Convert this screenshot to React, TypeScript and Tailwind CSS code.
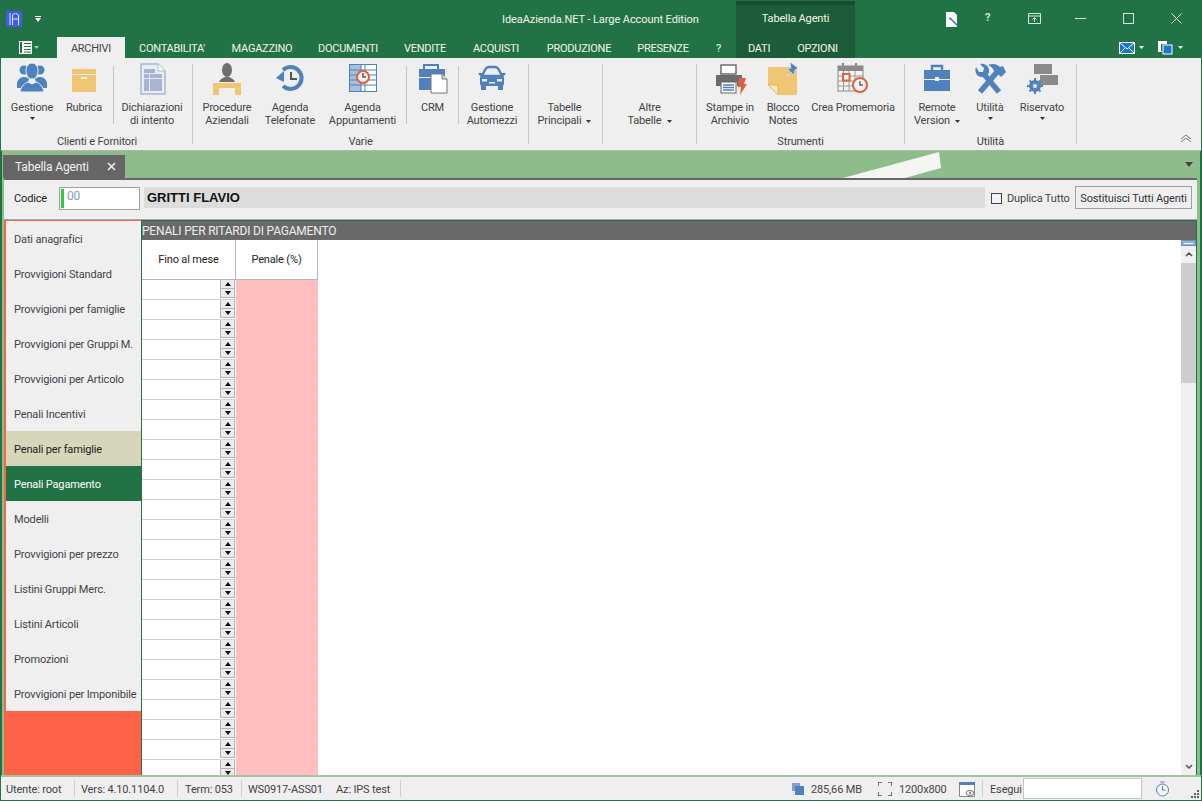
import React from "react";

const B = "#4f81bd";
const G = "#f0c674";
const R = "#e0603f";

const I = ({ children, w = 36 }: { children: React.ReactNode; w?: number }) => (
  <svg width={w} height={34} viewBox={`0 0 ${w} 34`} className="block">{children}</svg>
);

const People = () => (
  <I>
    <circle cx="10" cy="8" r="4.500" fill={B} /><circle cx="26" cy="8" r="4.500" fill={B} />
    <path d="M3 21c1-4 4-6 7-6s4 1 5 2l-3 9H3z" fill={B} /><path d="M33 21c-1-4-4-6-7-6s-4 1-5 2l3 9h9z" fill={B} />
    <path d="M12 8a6 7 0 0 1 12 0c0 5-2 9-6 9s-6-4-6-9z" fill={B} stroke="#efefef" strokeWidth="1" />
    <path d="M6 30c1-6 5-9 8-10l4 2 4-2c3 1 7 4 8 10z" fill={B} stroke="#efefef" strokeWidth="1" />
  </I>
);
const Box = () => (
  <I>
    <rect x="6" y="7" width="24" height="5" fill={G} /><rect x="6" y="13" width="24" height="17" fill={G} />
    <rect x="15" y="15" width="6" height="2" fill="#fff6dd" />
  </I>
);
const Doc = () => (
  <I>
    <path d="M7 2h17l7 7v23H7z" fill="#e9edf5" stroke="#aab6d2" strokeWidth="1.5" />
    <path d="M24 2v7h7" fill="#fff" stroke="#aab6d2" />
    <rect x="10" y="7" width="11" height="4" fill="#a8b4d0" /><rect x="10" y="12" width="5" height="4" fill="#a8b4d0" /><rect x="16" y="12" width="12" height="4" fill="#a8b4d0" />
    <rect x="10" y="17" width="5" height="12" fill="#a8b4d0" /><rect x="16" y="17" width="12" height="12" fill="#a8b4d0" />
  </I>
);
const Desk = () => (
  <I w={32}>
    <ellipse cx="16" cy="8" rx="5" ry="7" fill="#6e6e6e" /><path d="M8 20c1-3 4-4 6-5h4c2 1 5 2 6 5z" fill="#6e6e6e" />
    <path d="M2 21h28v12h-6v-7H8v7H2z" fill={G} />
  </I>
);
const History = () => (
  <I>
    <path d="M11 8A11 11 0 1 1 11 24" fill="none" stroke={B} strokeWidth="4" />
    <path d="M4 16l8-7v11z" fill={B} />
    <path d="M19 10v7h6" fill="none" stroke="#555" strokeWidth="2" />
  </I>
);
const Sched = () => (
  <I w={30}>
    <rect x="1.5" y="2.5" width="27" height="27" fill="#fff" stroke={B} />
    <rect x="2" y="3" width="11" height="26" fill="#a8c0dc" />
    <path d="M2 8h26M2 13h26M2 18h26M2 23h26M13 3v26M17 3v26" stroke={B} strokeWidth="1" />
    <circle cx="15" cy="15" r="6" fill="#f6f0e8" stroke={R} strokeWidth="2" />
    <path d="M15 11v4h3" stroke="#555" strokeWidth="1.5" fill="none" />
  </I>
);
const Crm = () => (
  <I w={32}>
    <path d="M7 7V3h14v4" fill="none" stroke={B} strokeWidth="2" />
    <rect x="2" y="7" width="26" height="8" fill={B} /><rect x="2" y="16" width="26" height="12" fill={B} />
    <path d="M14 12h11l5 5v14H14z" fill="#fff" stroke="#777" strokeWidth="1" /><path d="M25 12v5h5" fill="#ddd" stroke="#777" />
  </I>
);
const Car = () => (
  <I w={30}>
    <path d="M8 8c1-2 2-3 4-3h6c2 0 3 1 4 3l3 6H5z" fill="none" stroke={B} strokeWidth="2.4" />
    <path d="M1 11h4l1 3H3zM29 11h-4l-1 3h3z" fill={B} />
    <rect x="3" y="14" width="24" height="10" rx="2" fill={B} /><rect x="4" y="24" width="5" height="4" fill={B} /><rect x="21" y="24" width="5" height="4" fill={B} />
    <rect x="5" y="17" width="5" height="2.5" fill="#efefef" /><rect x="20" y="17" width="5" height="2.5" fill="#efefef" /><rect x="12" y="20" width="6" height="1.5" fill="#efefef" />
  </I>
);
const Printer = () => (
  <I>
    <rect x="9" y="3" width="15" height="9" fill="#fff" stroke="#666" strokeWidth="1.4" />
    <path d="M4 13h26v11h-5v-4H9v4H4z" fill="#6c6c6c" />
    <rect x="9" y="20" width="15" height="11" fill="#fff" stroke="#666" />
    <path d="M11 23h11M11 25.5h11M11 28h11" stroke={B} strokeWidth="1.4" />
    <path d="M27 16h7l-2 6h3l-7 11 1-8h-3z" fill={R} />
  </I>
);
const Note = () => (
  <I w={32}>
    <path d="M1 5h29v28H11L1 23z" fill={G} /><path d="M1 23h10v10z" fill="#f8e5b8" stroke="#d4ab55" strokeWidth=".7" />
    <path d="M23 0l8 6-3 2-1 5-3-3-4 4 3-5-3-2 4-1z" fill={B} stroke="#efefef" strokeWidth=".6" />
  </I>
);
const Cal = () => (
  <I>
    <rect x="3" y="4" width="25" height="25" fill="#f4f4f4" stroke="#8a8a8a" />
    <rect x="3" y="4" width="25" height="5" fill="#8a8a8a" />
    <path d="M8 1v6M21 1v6" stroke="#8a8a8a" strokeWidth="2" />
    <path d="M3 14h25M3 19h25M3 24h25M8.500 9v20M14 9v20M20 9v20" stroke="#999" strokeWidth="1" />
    <rect x="8" y="12" width="6.500" height="6.500" fill="#fff" stroke={R} strokeWidth="2" />
    <circle cx="25" cy="23" r="7" fill="#f4f4f4" stroke={R} strokeWidth="2" /><path d="M25 19v4h3" stroke="#666" strokeWidth="1.500" fill="none" />
  </I>
);
const Brief = () => (
  <I w={30}>
    <path d="M10 8V4h10v4" fill="none" stroke={B} strokeWidth="2.400" />
    <rect x="2" y="8" width="26" height="9" fill={B} /><rect x="2" y="18" width="26" height="11" fill={B} /><rect x="13" y="15" width="4" height="4" fill="#efefef" />
  </I>
);
const Tools = () => (
  <I w={32}>
    <path d="M9 11L25 30" stroke={B} strokeWidth="5.500" />
    <path d="M2 5c-2 5 1 11 8 10l5-4c1-6-3-10-9-9l4 4-1 4-4 0z" fill={B} />
    <path d="M23 10L6 30" stroke={B} strokeWidth="5.500" />
    <path d="M14 3c5-2 9-1 12 2l3-1 3 6-5 5-3-3-3-1-2-4c-1-2-3-3-5-4z" fill={B} />
  </I>
);
const Chat = () => (
  <I>
    <rect x="10" y="2" width="18" height="10" fill="#8a8a8a" /><rect x="16" y="13" width="18" height="10" fill="#8a8a8a" />
    <circle cx="11" cy="24" r="4.500" fill="none" stroke={B} strokeWidth="3" />
    <path d="M11 16v16M3 24h16M5.500 18.500l11 11M5.500 29.500l11-11" stroke={B} strokeWidth="2" />
    <circle cx="11" cy="24" r="2" fill="#efefef" />
  </I>
);

const Caret = ({ c = "#333", cls = "" }: { c?: string; cls?: string }) => (
  <svg width="5" height="3" viewBox="0 0 5 3" className={`inline-block ${cls}`}><path d="M0 0h5L2.500 3z" fill={c} /></svg>
);

const Item = ({ w, icon, l1, l2, caret, caret2 }: { w: string; icon?: React.ReactNode; l1: string; l2?: string; caret?: boolean; caret2?: boolean }) => (
  <div className={`${w} flex flex-col items-center`}>
    <div className="h-[43px] pt-[4px] flex justify-center">{icon}</div>
    <div className="leading-[13px] whitespace-nowrap">{l1}</div>
    {l2 && <div className="leading-[13px] whitespace-nowrap">{l2}{caret2 && <Caret cls="ml-[5px] align-middle" />}</div>}
    {caret && <div className="leading-[13px] flex justify-center pt-[3px]"><Caret /></div>}
  </div>
);
const Sep = () => <div className="w-px h-[80px] mt-[6px] bg-[#c6c6c6] shrink-0" />;
const Short = () => <div className="w-px h-[58px] mt-[8px] bg-[#c6c6c6] shrink-0" />;
const Group = ({ w, label, children }: { w: string; label?: string; children: React.ReactNode }) => (
  <div className={`${w} h-[92px] shrink-0 flex flex-col`}>
    <div className="h-[77px] flex">{children}</div>
    <div className="leading-[13px] text-center">{label}</div>
  </div>
);

const tabs = [
  { t: "CONTABILITA'", w: "w-[94px]" },
  { t: "MAGAZZINO", w: "w-[86px]" },
  { t: "DOCUMENTI", w: "w-[86px]" },
  { t: "VENDITE", w: "w-[68px]" },
  { t: "ACQUISTI", w: "w-[74px]" },
  { t: "PRODUZIONE", w: "w-[92px]" },
  { t: "PRESENZE", w: "w-[76px]" },
  { t: "?", w: "w-[35px]" },
];
const menu = ["Dati anagrafici", "Provvigioni Standard", "Provvigioni per famiglie", "Provvigioni per Gruppi M.", "Provvigioni per Articolo", "Penali Incentivi", "Penali per famiglie", "Penali Pagamento", "Modelli", "Provvigioni per prezzo", "Listini Gruppi Merc.", "Listini Articoli", "Promozioni", "Provvigioni per Imponibile"];
const rows = Array.from({ length: 25 }, (_, i) => i);

const Spin = ({ up }: { up?: boolean }) => (
  <div className="w-[15px] h-[9px] bg-[#ececec] border border-t-0 border-[#b4b4b4] flex items-center justify-center">
    <svg width="6" height="4" viewBox="0 0 6 4"><path d={up ? "M0 4h6L3 0z" : "M0 0h6L3 4z"} fill="#111" /></svg>
  </div>
);

export default function App() {
  return (
    <div className="w-[1202px] h-[801px] overflow-hidden flex flex-col bg-[#217346] font-['Roboto',sans-serif] text-[11px] text-[#444] tracking-[-0.15px]">
      {/* header */}
      <div className="h-[58px] flex shrink-0">
        <div className="w-[736px] shrink-0 flex flex-col">
          <div className="h-[37px] flex items-center">
            <div className="ml-[6px] w-[16px] h-[16px] bg-[#3f5fe0] flex items-center justify-center">
              <svg width="10" height="12" viewBox="0 0 10 12"><path d="M1 0v12M3.500 12V2l3-2 3 2v10M3.500 6h6" stroke="#dfe6ff" fill="none" /></svg>
            </div>
            <svg width="6" height="6" viewBox="0 0 6 6" className="ml-[13px]"><path d="M0 0h6v1H0zM0 2h6L3 6z" fill="#fff" /></svg>
            <div className="ml-[461px] pt-[3px] text-[#f4f4ea] whitespace-nowrap tracking-[-0.08px]">IdeaAzienda.NET - Large Account Edition</div>
          </div>
          <div className="h-[21px] flex items-stretch text-[#f5f5e6] tracking-[-0.25px]">
            <div className="w-[57px] shrink-0 pl-[19px] flex items-center gap-[2px]">
              <svg width="13" height="13" viewBox="0 0 13 13"><path d="M0 0h13v13H0z" fill="#fff" /><path d="M1 1h2v11H1zM5 2h7v1H5zM5 5h7v1H5zM5 8h7v1H5zM5 10.500h7v1H5z" fill="#217346" /></svg>
              <Caret c="#9cc" />
            </div>
            <div className="w-[68px] shrink-0 pt-[3px] bg-[#efefef] text-[#444] flex items-center justify-center">ARCHIVI</div>
            {tabs.map((t) => <div key={t.t} className={`${t.w} shrink-0 pt-[3px] flex items-center justify-center whitespace-nowrap`}>{t.t}</div>)}
          </div>
        </div>
        <div className="w-[119px] shrink-0 flex flex-col bg-[#1d5c3a] text-[#f5f5e6] border-t-[4px] border-[#184d31] mt-px">
          <div className="h-[32px] pb-[4px] flex items-center justify-center">Tabella Agenti</div>
          <div className="h-[21px] pt-[3px] flex items-center tracking-[-0.25px]">
            <span className="pl-[12px] pr-[27px]">DATI</span><span>OPZIONI</span>
          </div>
        </div>
        <div className="flex-1 flex flex-col">
          <div className="h-[37px] flex items-center text-[#d9e6dd]">
            <svg width="14" height="16" viewBox="0 0 14 16" className="ml-[90px]"><path d="M1 1h8l3 3v12H1z" fill="#fff" /><path d="M6 7l6 6 1 1-1 1-6-6-2-1 1-2z" fill="#2a6fc0" /></svg>
            <span className="ml-[26px] w-[6px] font-bold">?</span>
            <svg width="14" height="12" viewBox="0 0 14 12" className="ml-[37px]"><path d="M.5.500h12v10H.5zM.5 3h12M6.500 9V5M4.500 6.500l2-2 2 2" fill="none" stroke="#d9e6dd" /></svg>
            <div className="ml-[33px] w-[11px] h-px bg-[#d9e6dd]" />
            <div className="ml-[37px] w-[11px] h-[11px] border border-[#d9e6dd]" />
            <svg width="11" height="11" viewBox="0 0 11 11" className="ml-[37px]"><path d="M.5.500l10 10M10.500.500l-10 10" stroke="#d9e6dd" /></svg>
          </div>
          <div className="h-[21px] flex items-center">
            <svg width="16" height="12" viewBox="0 0 16 12" className="ml-[264px]"><rect width="16" height="12" fill="#fff" /><rect x="1" y="1" width="14" height="10" fill="#1976d2" /><path d="M1 1l7 6 7-6M1 11l5-5M15 11l-5-5" stroke="#fff" fill="none" /></svg>
            <Caret c="#fff" cls="ml-[4px]" />
            <svg width="15" height="14" viewBox="0 0 15 14" className="ml-[14px]"><path d="M0 0h9v3H3v7h1v1H0z" fill="#fff" /><rect x="5" y="4" width="9" height="9" fill="#1976d2" stroke="#fff" /></svg>
            <Caret c="#fff" cls="ml-[5px]" />
          </div>
        </div>
      </div>

      {/* ribbon */}
      <div className="h-[93px] mx-[1px] bg-[#efefef] border-b border-[#b4b4b4] shrink-0 flex pl-[1px] relative">
        <Group w="w-[190px]" label="Clienti e Fornitori">
          <Item w="w-[60px]" icon={<People />} l1="Gestione" caret />
          <Item w="w-[44px]" icon={<Box />} l1="Rubrica" />
          <div className="w-[7px]" /><Short />
          <Item w="w-[76px]" icon={<Doc />} l1="Dichiarazioni" l2="di intento" />
        </Group>
        <Sep />
        <Group w="w-[335px]" label="Varie">
          <Item w="w-[68px]" icon={<Desk />} l1="Procedure" l2="Aziendali" />
          <Item w="w-[58px]" icon={<History />} l1="Agenda" l2="Telefonate" />
          <Item w="w-[87px]" icon={<Sched />} l1="Agenda" l2="Appuntamenti" />
          <Short />
          <Item w="w-[51px]" icon={<Crm />} l1="CRM" />
          <Short />
          <Item w="w-[66px]" icon={<Car />} l1="Gestione" l2="Automezzi" />
        </Group>
        <Sep />
        <Group w="w-[73px]">
          <Item w="w-[71px]" l1="Tabelle" l2="Principali" caret2 />
        </Group>
        <Sep />
        <Group w="w-[93px]">
          <Item w="w-[93px]" l1="Altre" l2="Tabelle" caret2 />
        </Group>
        <Sep />
        <Group w="w-[207px]" label="Strumenti">
          <Item w="w-[66px]" icon={<Printer />} l1="Stampe in" l2="Archivio" />
          <Item w="w-[40px]" icon={<Note />} l1="Blocco" l2="Notes" />
          <Item w="w-[100px]" icon={<Cal />} l1="Crea Promemoria" />
        </Group>
        <Sep />
        <Group w="w-[171px]" label="Utilità">
          <Item w="w-[64px]" icon={<Brief />} l1="Remote" l2="Version" caret2 />
          <Item w="w-[42px]" icon={<Tools />} l1="Utilità" caret />
          <Item w="w-[62px]" icon={<Chat />} l1="Riservato" caret />
        </Group>
        <Sep />
        <svg width="12" height="9" viewBox="0 0 12 9" className="absolute left-[1179px] top-[76px]"><path d="M1 5l5-4 5 4M1 8l5-4 5 4" fill="none" stroke="#777" /></svg>
      </div>

      {/* body */}
      <div className="flex-1 min-h-0 mx-[2px] bg-[#8fbc8b] flex flex-col relative">
        <div className="h-[27px] shrink-0 flex items-end pl-px relative">
          <div className="w-[122px] h-[23px] bg-[#666] text-[#f2f2f2] flex items-center pl-[12px] justify-between pr-[9px] text-[12px]">
            <span>Tabella Agenti</span>
            <svg width="9" height="9" viewBox="0 0 9 9"><path d="M1 1l7 7M8 1l-7 7" stroke="#eee" strokeWidth="1.600" /></svg>
          </div>
          <svg width="100" height="27" viewBox="0 0 100 27" className="absolute left-[840px] top-0"><path d="M1 27L97 1l2 16-36 10z" fill="#f4f6f2" /></svg>
          <svg width="8" height="5" viewBox="0 0 8 5" className="absolute left-[1183px] top-[11px]"><path d="M0 0h8L4 5z" fill="#444" /></svg>
        </div>
        <div className="flex-1 min-h-0 ml-[2px] mr-[3px] border-t-2 border-[#666] flex flex-col">
          {/* code row */}
          <div className="h-[40px] shrink-0 bg-[#efefef] border-b border-[#a8a8a8] flex items-center pl-[10px] pr-[5px] pb-[2px]">
            <span className="w-[45px] pt-[2px] text-[#222]">Codice</span>
            <div className="w-[81px] h-[23px] bg-white border border-[#a0a0a0] flex items-start pl-[1px] pt-[1px] gap-[3px]">
              <div className="w-[3px] h-[19px] bg-[#2ecc40]" />
              <span className="text-[#7f9cc0] text-[12px] leading-[14px]">00</span>
            </div>
            <div className="ml-[4px] mb-[2px] pt-[1px] w-[841px] h-[21px] bg-[#dcdcdc] pl-[3px] font-['Liberation_Sans',sans-serif] font-bold text-[13px] text-[#111] tracking-normal flex items-center">GRITTI FLAVIO</div>
            <div className="ml-[6px] w-[11px] h-[11px] border border-[#444] bg-[#f4f4f4]" />
            <span className="ml-[5px] w-[68px] pt-[2px] whitespace-nowrap">Duplica Tutto</span>
            <div className="w-[117px] h-[23px] mb-[2px] pt-[3px] border border-[#a0a0a0] flex items-center justify-center whitespace-nowrap text-[#333]">Sostituisci Tutti Agenti</div>
          </div>
          {/* main */}
          <div className="flex-1 min-h-0 flex border-r border-[#217346] bg-white">
            <div className="w-[138px] shrink-0 bg-[#ff6347] pl-[2px] pt-[1px] border-r border-[#217346] flex flex-col">
              {menu.map((m, i) => (
                <div key={m} className={`h-[35px] shrink-0 flex items-center pl-[8px] pt-[4px] whitespace-nowrap ${i === 6 ? "bg-[#d6d6ba] text-[#222]" : i === 7 ? "bg-[#217346] text-white" : "bg-[#efefef]"}`}>{m}</div>
              ))}
            </div>
            <div className="flex-1 min-w-0 flex flex-col border-t border-[#217346]">
              <div className="h-[19px] shrink-0 bg-[#696969] text-[#eee] text-[12px] leading-[21px] whitespace-nowrap tracking-[-0.2px]">PENALI PER RITARDI DI PAGAMENTO</div>
              <div className="flex-1 min-h-0 flex overflow-hidden">
                <div className="w-[176px] shrink-0 flex flex-col overflow-hidden">
                  <div className="h-[40px] shrink-0 flex border-b border-[#a9b9cb] text-[#222]">
                    <div className="w-[94px] pt-[2px] border-r border-[#a9b9cb] flex items-center justify-center">Fino al mese</div>
                    <div className="flex-1 pt-[2px] border-r border-[#a9b9cb] flex items-center justify-center">Penale (%)</div>
                  </div>
                  {rows.map((r) => (
                    <div key={r} className="h-[20px] shrink-0 flex">
                      <div className="w-[94px] border-b border-[#d2d2d2] flex justify-end">
                        <div className="mr-px flex flex-col"><Spin up /><Spin /></div>
                      </div>
                      <div className="flex-1 bg-[#ffbfbf] border-b border-[#f2c8c8]" />
                    </div>
                  ))}
                </div>
                <div className="flex-1" />
                <div className="w-[15px] shrink-0 bg-[#f0f0f0] flex flex-col">
                  <div className="h-[6px] shrink-0 bg-[#8fb0d8] border border-[#6a90c0] flex items-center justify-center"><div className="w-[9px] h-px bg-white" /></div>
                  <div className="h-[17px] shrink-0 flex items-center justify-center">
                    <svg width="8" height="5" viewBox="0 0 8 5"><path d="M1 4l3-3 3 3" fill="none" stroke="#555" strokeWidth="1.500" /></svg>
                  </div>
                  <div className="h-[120px] shrink-0 bg-[#cdcdcd]" />
                  <div className="flex-1" />
                  <div className="h-[17px] shrink-0 flex items-center justify-center">
                    <svg width="8" height="5" viewBox="0 0 8 5"><path d="M1 1l3 3 3-3" fill="none" stroke="#555" strokeWidth="1.500" /></svg>
                  </div>
                </div>
              </div>
            </div>
          </div>
        </div>
      </div>

      {/* status */}
      <div className="h-[25px] shrink-0 mx-[1px] mb-px border-t-2 border-[#a3c4a3] bg-[#efefef] flex items-center whitespace-nowrap">
        <span className="ml-[5px] w-[68px] pt-[3px]">Utente: root</span>
        <div className="w-px h-[17px] bg-[#cfcfcf]" />
        <span className="ml-[6px] w-[96px] pt-[3px]">Vers: 4.10.1104.0</span>
        <div className="w-px h-[17px] bg-[#cfcfcf]" />
        <span className="ml-[7px] w-[56px] pt-[3px]">Term: 053</span>
        <div className="w-px h-[17px] bg-[#cfcfcf]" />
        <span className="ml-[6px] w-[88px] pt-[3px]">WS0917-ASS01</span>
        <span className="w-[64px] pt-[3px]">Az: IPS test</span>
        <div className="w-px h-[17px] bg-[#cfcfcf]" />
        <svg width="12" height="12" viewBox="0 0 12 12" className="ml-[391px]"><rect width="8" height="8" fill="#7ea3d0" /><rect x="3" y="3" width="9" height="9" fill="#4f81bd" /></svg>
        <span className="ml-[7px] w-[67px] pt-[3px]">285,66 MB</span>
        <svg width="14" height="14" viewBox="0 0 14 14"><path d="M0 4V0h4M10 0h4v4M14 10v4h-4M4 14H0v-4" fill="none" stroke="#555" strokeWidth="1.600" /></svg>
        <span className="ml-[7px] w-[60px] pt-[3px]">1200x800</span>
        <svg width="16" height="16" viewBox="0 0 16 16"><path d="M.5 1.500h15v14H.5z" fill="#fff" stroke="#888" /><rect y="1" width="16" height="3" fill="#4f81bd" /><ellipse cx="11" cy="12" rx="4" ry="2.500" fill="#f4f4f4" stroke="#777" /><circle cx="11" cy="12" r="1" fill="#777" /></svg>
        <div className="ml-[7px] w-px h-[17px] bg-[#cfcfcf]" />
        <span className="ml-[7px] w-[33px] pt-[3px]">Esegui</span>
        <div className="w-[119px] h-[21px] bg-white border border-[#c4c4c4]" />
        <svg width="15" height="16" viewBox="0 0 15 16" className="ml-[13px]"><circle cx="7.500" cy="9" r="6" fill="#f4f8fc" stroke="#4f81bd" /><path d="M5.500 1h4M7.500 5v4h3" fill="none" stroke="#4f81bd" /></svg>
        <svg width="9" height="9" viewBox="0 0 9 9" className="ml-[21px] self-end mb-[1px]"><path d="M6 0h2v2H6zM3 3h2v2H3zM6 3h2v2H6zM0 6h2v2H0zM3 6h2v2H3zM6 6h2v2H6z" fill="#666" /></svg>
      </div>
    </div>
  );
}
